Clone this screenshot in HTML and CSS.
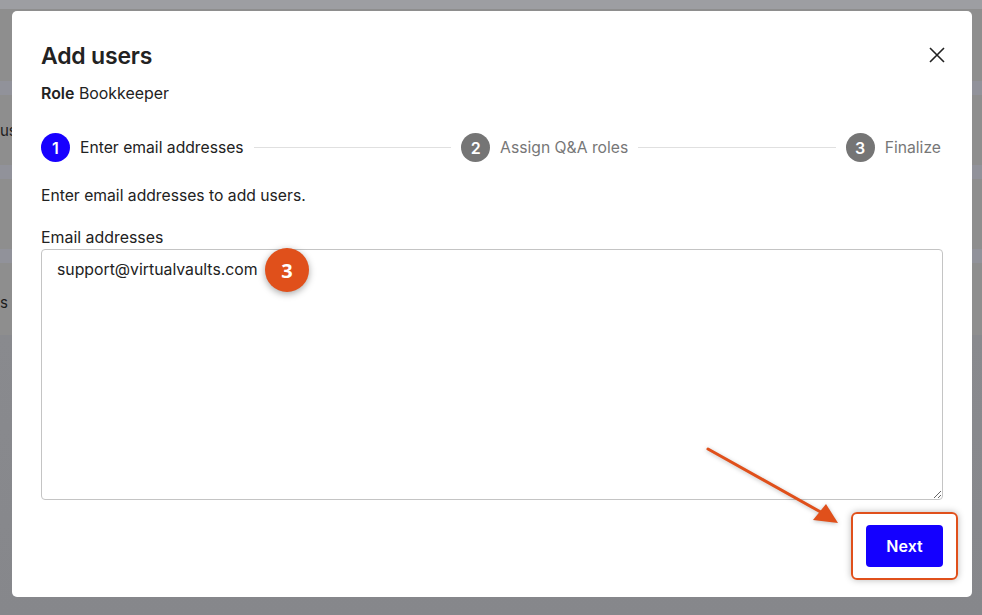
FILE: index.html
```html
<!DOCTYPE html>
<html lang="en">

<head>
    <meta charset="UTF-8">
    <meta name="viewport" content="width=device-width, initial-scale=1.0">
    <title>Add users</title>
    <link rel="stylesheet" href="styles.css">
</head>

<body>
    <!-- ----------- page behind the overlay ---------------- -->
    <div class="page">
        <div class="topbar"></div>
        <div class="rows">
            <div class="row first"></div>
            <div class="band"></div>
            <div class="row"><span>us</span></div>
            <div class="band"></div>
            <div class="row"></div>
            <div class="band"></div>
            <div class="row last"><span>s</span></div>
        </div>
    </div>

    <!-- ----------- modal ---------------- -->
    <div class="modal">
        <div class="head">
            <h1>Add users</h1>
            <button class="close" aria-label="Close">
                <svg width="16" height="16" viewBox="0 0 16 16">
                    <path d="M1 1 L15 15 M15 1 L1 15" stroke="#222" stroke-width="1.6" fill="none" />
                </svg>
            </button>
        </div>

        <p class="role"><b>Role</b> Bookkeeper</p>

        <div class="steps">
            <div class="step active"><span class="num">1</span>Enter email addresses</div>
            <div class="line"></div>
            <div class="step"><span class="num">2</span>Assign Q&amp;A roles</div>
            <div class="line"></div>
            <div class="step"><span class="num">3</span>Finalize</div>
        </div>

        <p class="desc">Enter email addresses to add users.</p>

        <label class="label" for="emails">Email addresses</label>
        <textarea id="emails">support@virtualvaults.com</textarea>

        <div class="foot">
            <div class="highlight">
                <button class="next">Next</button>
            </div>
        </div>
    </div>

    <!-- ----------- annotations ---------------- -->
    <div class="badge">3</div>

    <svg class="arrow" width="982" height="615" viewBox="0 0 982 615">
        <line x1="708" y1="449" x2="826" y2="515" stroke="#e0501b" stroke-width="3" stroke-linecap="round" />
        <polygon points="838,523 826,504 813,520" fill="#e0501b" />
    </svg>
</body>

</html>
```

FILE: styles.css
```css
* {
    box-sizing: border-box;
    padding: 0;
    margin: 0;
}

body {
    width: 982px;
    height: 615px;
    overflow: hidden;
    font-family: Inter, "Noto Sans", sans-serif;
    color: #222;
    background: #898a8e;
    position: relative;
}

/* page behind the overlay */

.page {
    height: 100%;
    display: flex;
    flex-direction: column;
    background: linear-gradient(to bottom, #8e8e8e 0, #8e8e8e 335px, #898a8e 335px, #86878b 100%);
}

.topbar {
    height: 9px;
    background: #9d9ea2;
}

.rows {
    display: flex;
    flex-direction: column;
}

.row {
    height: 70px;
    display: flex;
    align-items: center;
    font-size: 15px;
    color: #1c1c1c;
}

.row.first {
    height: 72px;
}

.row.last {
    height: 78px;
}

.band {
    height: 14px;
    background: #9394a0;
    opacity: .7;
}

/* modal */

.modal {
    position: absolute;
    left: 12px;
    top: 11px;
    width: 960px;
    height: 586px;
    background: #fff;
    border-radius: 5px;
    padding: 29px 29px 30px;
    display: flex;
    flex-direction: column;
}

.modal > * {
    flex-shrink: 0;
}

.head {
    display: flex;
    justify-content: space-between;
    align-items: center;
    height: 32px;
}

.head h1 {
    font-size: 23px;
    font-weight: 600;
    letter-spacing: -0.2px;
    color: #222;
}

.close {
    border: none;
    background: none;
    width: 16px;
    height: 16px;
    margin-right: -2px;
    margin-top: -2px;
    display: flex;
}

.role {
    margin-top: 11px;
    font-size: 15.9px;
    line-height: 22px;
}

.role b {
    font-weight: 600;
}

.steps {
    margin-top: 28px;
    padding-right: 2px;
    display: flex;
    align-items: center;
    height: 29px;
}

.step {
    display: flex;
    align-items: center;
    gap: 10px;
    font-size: 15.7px;
    color: #777;
    white-space: nowrap;
}

.step.active {
    color: #222;
}

.num {
    width: 29px;
    height: 29px;
    border-radius: 50%;
    background: #757575;
    color: #fff;
    font-size: 16px;
    font-weight: 600;
    display: flex;
    align-items: center;
    justify-content: center;
}

.step.active .num {
    background: #1800ff;
}

.line {
    flex: 1;
    height: 1px;
    background: #e0e0e0;
    margin: 0 10px;
}

.desc {
    margin-top: 23px;
    font-size: 15.7px;
    line-height: 22px;
}

.label {
    margin-top: 20px;
    font-size: 15.9px;
    line-height: 22px;
}

textarea {
    margin-top: 0;
    height: 251px;
    width: 100%;
    border: 1px solid #c4c4c4;
    border-radius: 4px;
    padding: 9px 15px;
    font-family: Inter, "Noto Sans", sans-serif;
    font-size: 15.8px;
    line-height: 22px;
    color: #222;
    outline: none;
    resize: vertical;
}

.foot {
    margin-top: 12px;
    display: flex;
    justify-content: flex-end;
    margin-right: -15px;
}

.highlight {
    border: 2px solid #e0501b;
    border-radius: 6px;
    padding: 11px 13px;
    box-shadow: 0 0 7px rgba(0, 0, 0, .28);
}

.next {
    width: 77px;
    height: 42px;
    border: none;
    border-radius: 4px;
    background: #1400ff;
    color: #fff;
    font-family: Inter, "Noto Sans", sans-serif;
    font-size: 16px;
    font-weight: 600;
}

/* annotations */

.badge {
    position: absolute;
    left: 265px;
    top: 248px;
    width: 44px;
    height: 44px;
    border-radius: 50%;
    background: #e0501b;
    color: #fff;
    font-family: "Open Sans", sans-serif;
    font-weight: 700;
    font-size: 20px;
    display: flex;
    align-items: center;
    justify-content: center;
    box-shadow: 0 2px 7px rgba(0, 0, 0, .35);
}

.arrow {
    position: absolute;
    left: 0;
    top: 0;
    pointer-events: none;
    filter: drop-shadow(0 1px 2px rgba(0, 0, 0, .25));
}
```
